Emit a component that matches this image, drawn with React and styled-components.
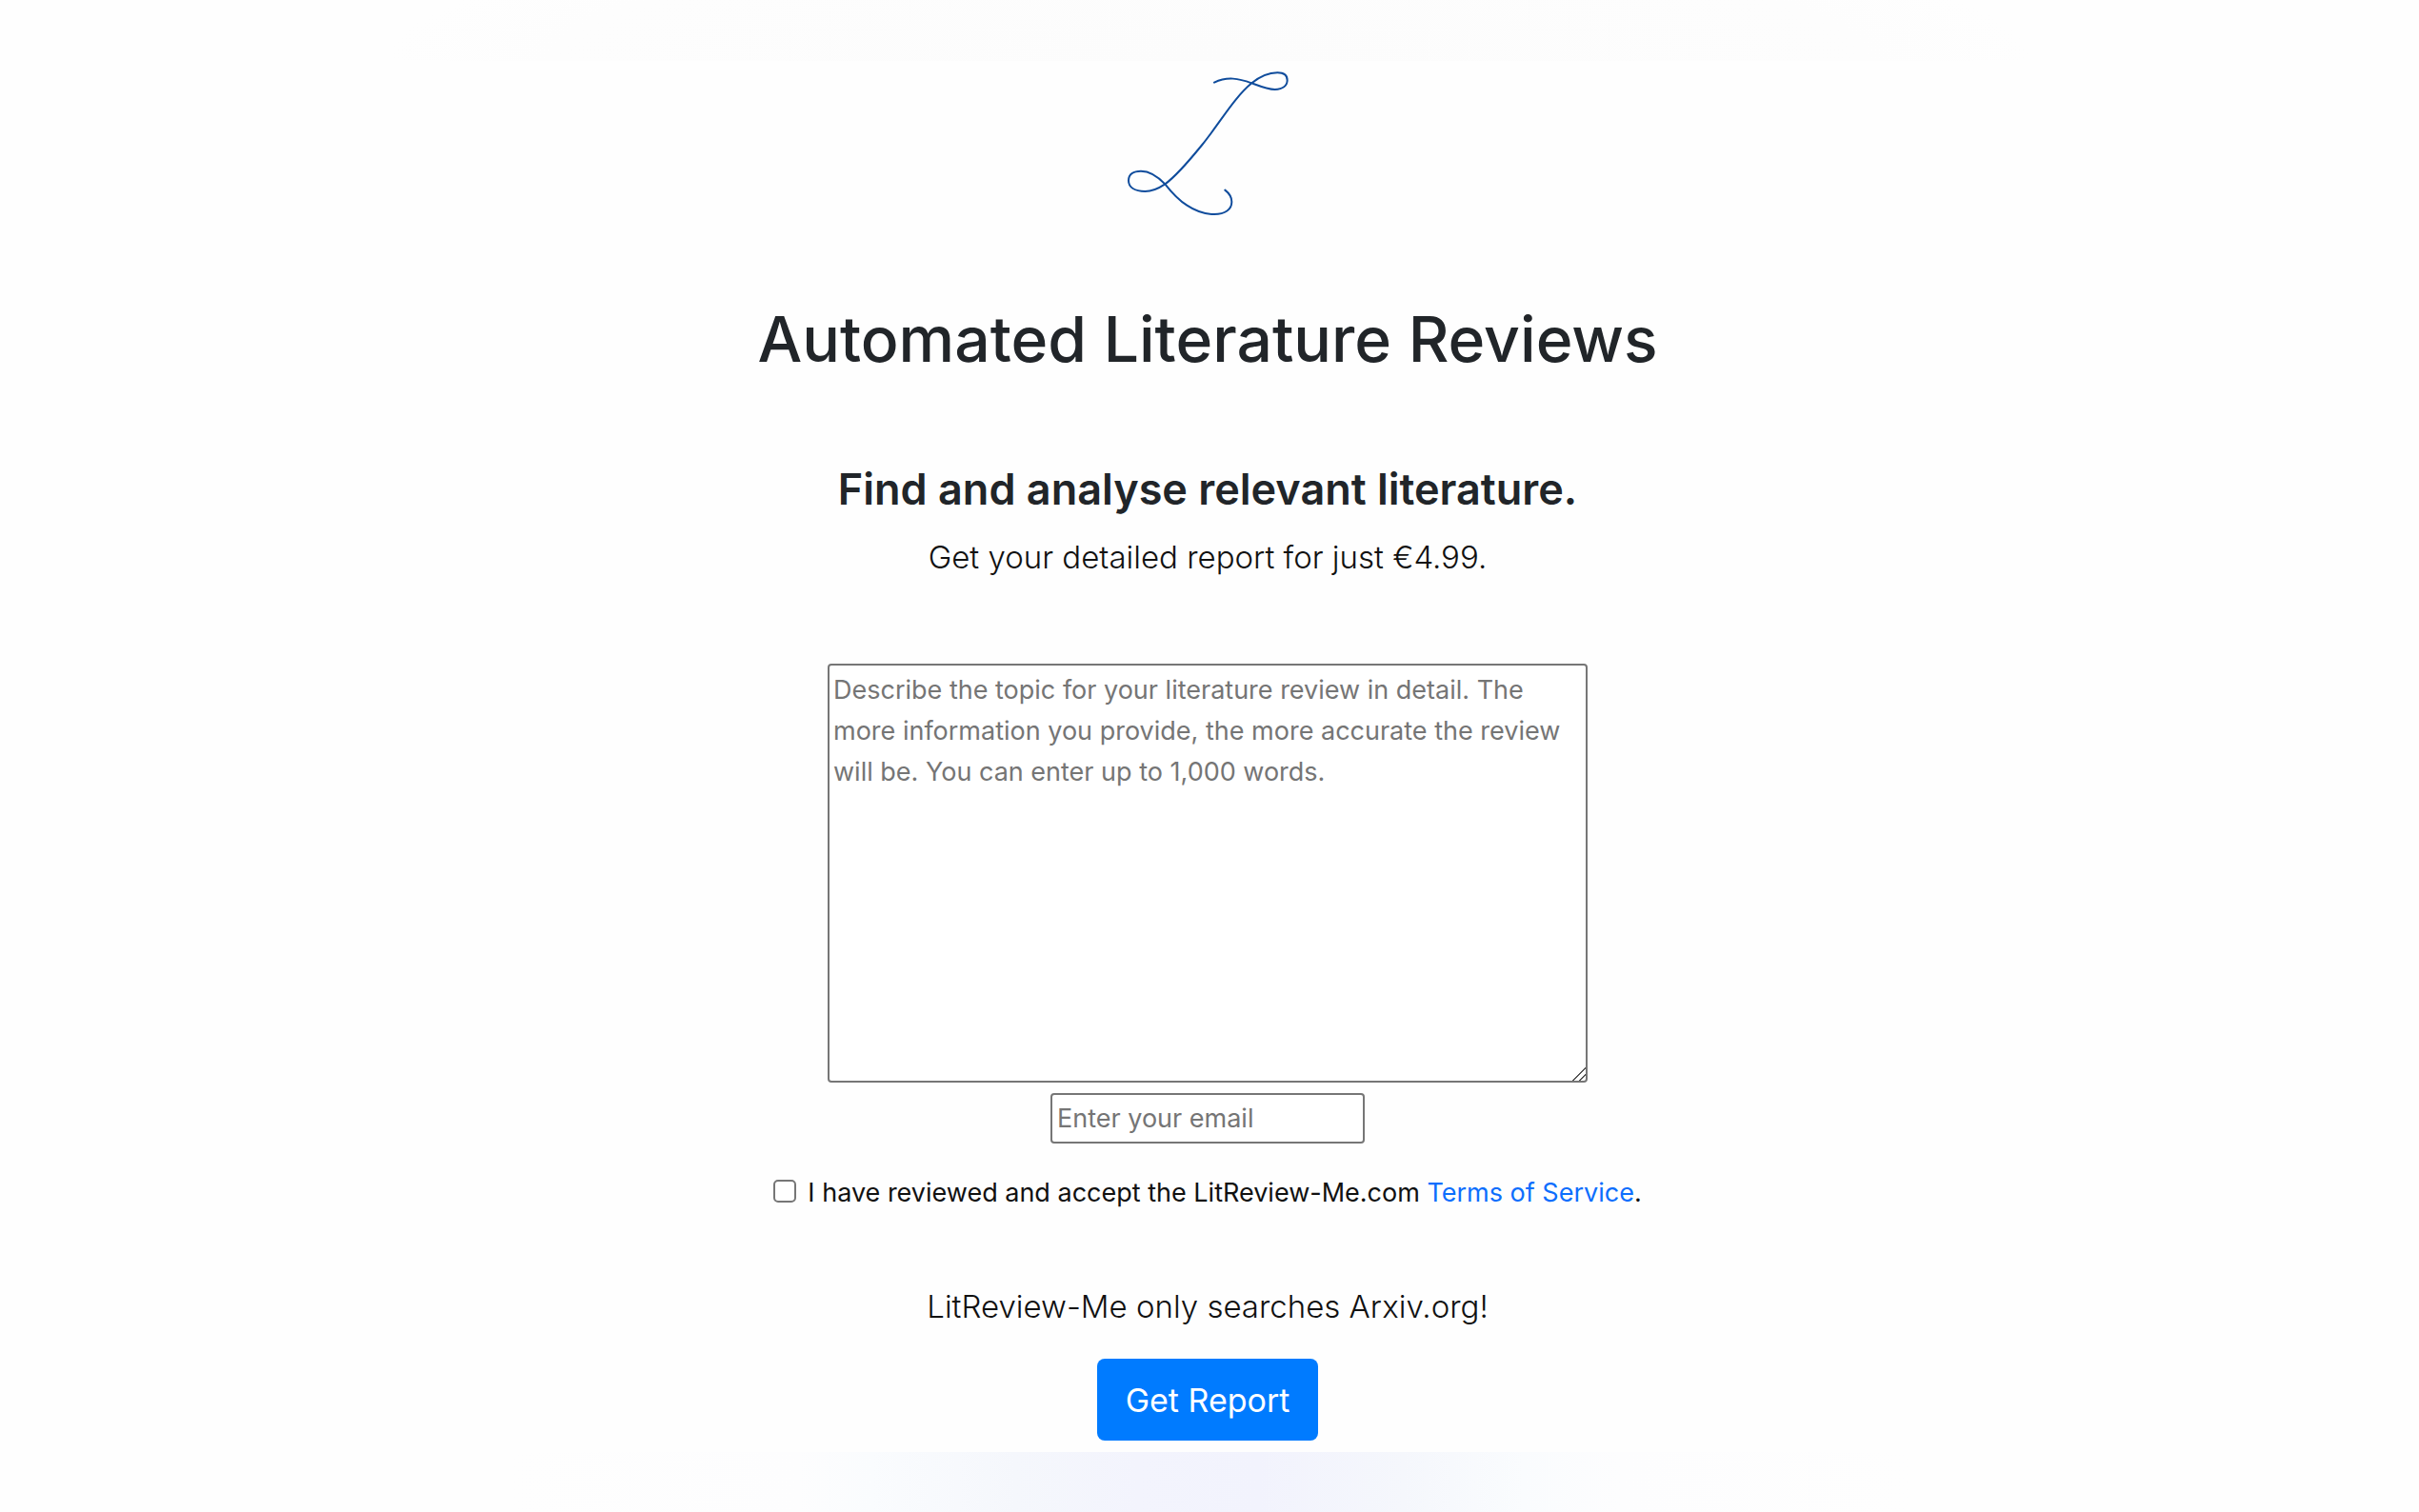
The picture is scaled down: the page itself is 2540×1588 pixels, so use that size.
import styled, { createGlobalStyle } from 'styled-components';
import { useState } from 'react';

const GlobalStyle = createGlobalStyle`
*, *::before, *::after {
    box-sizing: border-box;
}
body {
    margin: 0;
    background-color: #fefefe;
    color: #212529;
    font-family: Inter, "Liberation Sans", sans-serif;
    font-size: 27px;
    line-height: 43px;
}
h1, h2, p {
    margin: 0;
}
`;

const Page = styled.div`
    min-height: 100vh;
    display: flex;
    flex-direction: column;
`;

const TopBand = styled.div`
    height: 64px;
    background: radial-gradient(ellipse 34% 240% at 50% 100%, #fcfcfc 0%, #fdfdfd 80%, #fefefe 100%);
`;

const BottomBand = styled.div`
    flex: 1;
    min-height: 62px;
    background: linear-gradient(90deg, #fefefe 21%, #fdfdfe 33%, #fafcfe 36%, #f5f7fc 42%, #f3f4fd 47%, #f2f3fd 52%, #f5f7fc 58%, #fafcfe 63%, #fdfdfe 67%, #fefefe 79%);
`;

const Main = styled.main`
    display: flex;
    flex-direction: column;
    align-items: center;
    padding: 0 4px 12px 0;
    text-align: center;
`;

const Logo = styled.svg`
    display: block;
    width: 216px;
    height: 180px;
    fill: none;
    stroke: #0f4c9c;
    stroke-width: 6;
    stroke-linecap: round;
`;

const Title = styled.h1`
    margin-top: 69px;
    font-size: 66px;
    font-weight: 500;
    line-height: 86px;
`;

const Subtitle = styled.h2`
    margin-top: 86px;
    font-size: 45px;
    font-weight: 600;
    line-height: 58px;
`;

const Lead = styled.p`
    margin-top: ${(props) => props.$gap};
    font-size: 33px;
    font-weight: 300;
    line-height: 54px;
    color: #111;
`;

const Form = styled.form`
    width: 100%;
    display: flex;
    flex-direction: column;
    align-items: center;
    margin-top: 85px;
`;

const TopicInput = styled.textarea`
    width: 798px;
    max-width: 100%;
    height: 440px;
    padding: 4px;
    border: 2px solid #767676;
    border-radius: 4px;
    background-color: white;
    font: inherit;
    color: #212529;
    &::placeholder {
        color: #757575;
    }
    &::-webkit-resizer {
        background: linear-gradient(135deg, transparent 52%, #555 52%, #555 58%, transparent 58%, transparent 76%, #555 76%, #555 82%, transparent 82%);
    }
`;

const EmailInput = styled.input`
    width: 330px;
    height: 53px;
    margin-top: 11px;
    padding: 2px 5px;
    border: 2px solid #767676;
    border-radius: 4px;
    background-color: white;
    font: inherit;
    color: #212529;
    &::placeholder {
        color: #757575;
    }
`;

const Terms = styled.div`
    display: flex;
    align-items: center;
    gap: 12px;
    margin-top: 30px;
    color: #111;
`;

const Checkbox = styled.input`
    appearance: none;
    width: 24px;
    height: 24px;
    margin: 0 0 3px;
    border: 2px solid #767676;
    border-radius: 5px;
    background-color: white;
    &:checked {
        background-color: #007bff;
        border-color: #007bff;
    }
`;

const TermsLink = styled.a`
    color: #0d6efd;
    text-decoration: none;
`;

const Submit = styled.button`
    margin-top: 28px;
    height: 86px;
    padding: 0 30px;
    border: none;
    border-radius: 8px;
    background-color: #007bff;
    font: inherit;
    font-size: 34px;
    color: white;
    cursor: pointer;
`;

function App() {
    const [topic, setTopic] = useState('');
    const [email, setEmail] = useState('');
    const [accepted, setAccepted] = useState(false);

    const onSubmit = (e) => {
        e.preventDefault();
    };

    return (
        <>
            <GlobalStyle />
            <Page>
                <TopBand />
                <Main>
                    <Logo viewBox="0 42 648 540" aria-hidden="true">
                        <path d="M345 110 C386 90 422 97 463 112 C495 124 515 132 536 132 C562 131 575 119 575 103 C575 87 563 79 544 79 C517 79 489 91 463 112 C408 157 362 238 307 306 C264 359 222 407 190 430 C166 446 147 453 127 453 C95 452 75 440 75 419 C75 399 91 389 114 389 C142 389 169 408 190 430 C212 458 232 480 259 497 C289 517 319 525 345 525 C379 525 400 510 400 486 C400 471 392 459 379 449" />
                    </Logo>
                    <Title>Automated Literature Reviews</Title>
                    <Subtitle>Find and analyse relevant literature.</Subtitle>
                    <Lead $gap="15px">Get your detailed report for just €4.99.</Lead>
                    <Form onSubmit={onSubmit}>
                        <TopicInput
                            aria-label="Topic"
                            value={topic}
                            onChange={(e) => setTopic(e.target.value)}
                            placeholder="Describe the topic for your literature review in detail. The more information you provide, the more accurate the review will be. You can enter up to 1,000 words."
                        />
                        <EmailInput
                            type="email"
                            aria-label="Email"
                            value={email}
                            onChange={(e) => setEmail(e.target.value)}
                            placeholder="Enter your email"
                        />
                        <Terms>
                            <Checkbox
                                type="checkbox"
                                id="terms"
                                checked={accepted}
                                onChange={(e) => setAccepted(e.target.checked)}
                            />
                            <label htmlFor="terms">
                                I have reviewed and accept the LitReview-Me.com <TermsLink href="#terms">Terms of Service</TermsLink>.
                            </label>
                        </Terms>
                        <Lead $gap="71px">LitReview-Me only searches Arxiv.org!</Lead>
                        <Submit type="submit">Get Report</Submit>
                    </Form>
                </Main>
                <BottomBand />
            </Page>
        </>
    );
}

export default App;
